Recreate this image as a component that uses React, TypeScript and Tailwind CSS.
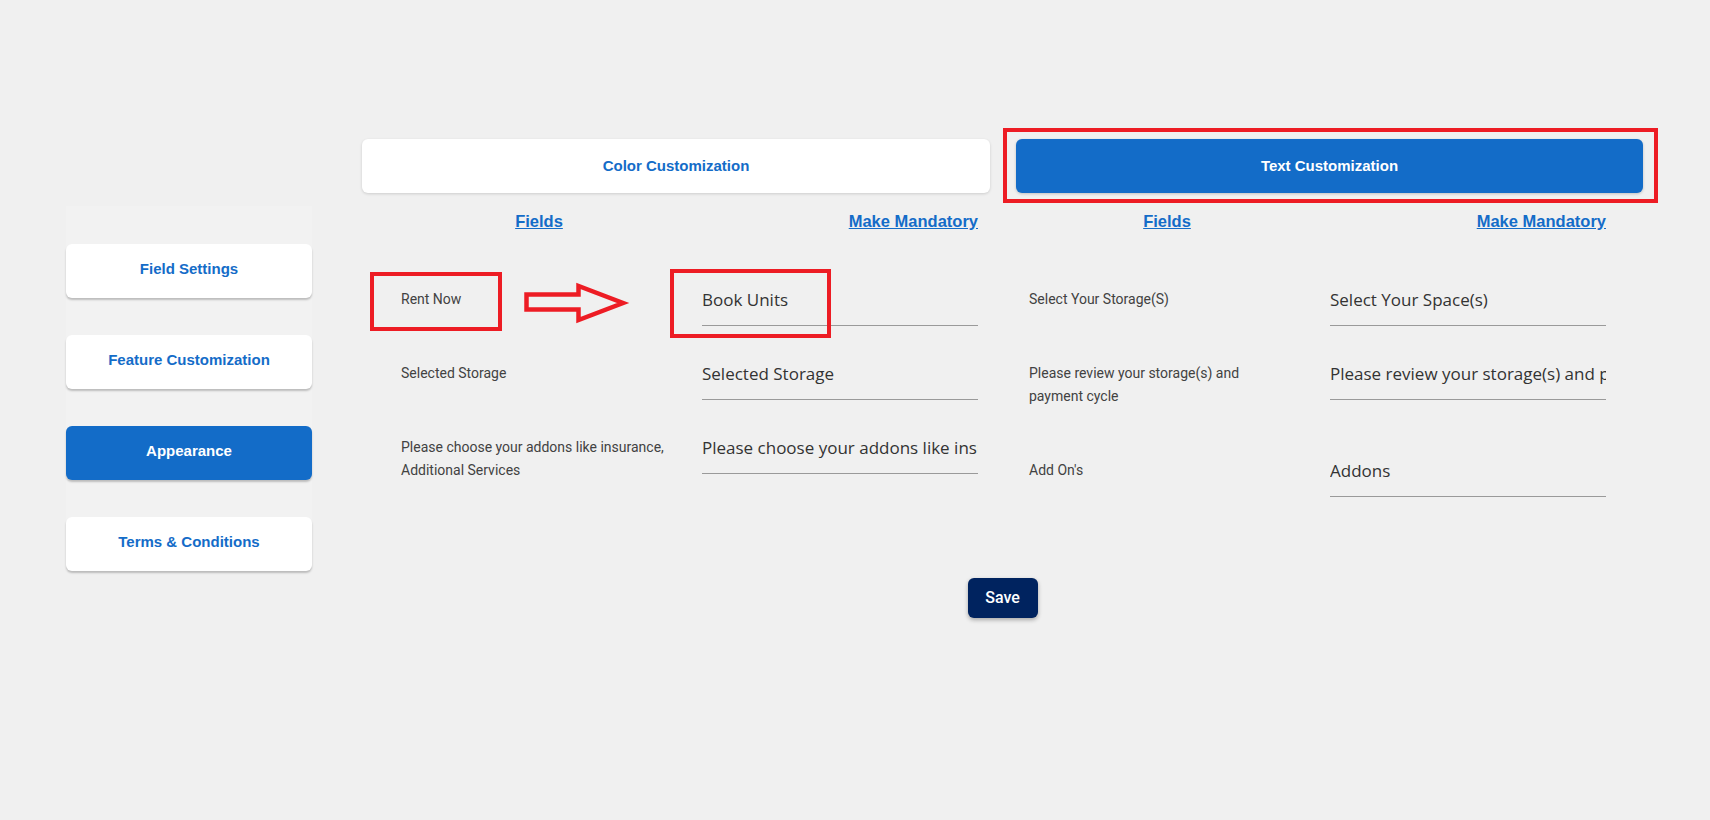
import React from "react";

type Row = { label: string[]; value: string };

const leftRows: Row[] = [
  { label: ["Rent Now"], value: "Book Units" },
  { label: ["Selected Storage"], value: "Selected Storage" },
  {
    label: ["Please choose your addons like insurance,", "Additional Services"],
    value: "Please choose your addons like insurance, Additional Services",
  },
];

const rightRows: Row[] = [
  { label: ["Select Your Storage(S)"], value: "Select Your Space(s)" },
  {
    label: ["Please review your storage(s) and", "payment cycle"],
    value: "Please review your storage(s) and payment cycle",
  },
  { label: ["Add On's"], value: "Addons" },
];

function SideButton({ text, active }: { text: string; active?: boolean }) {
  return (
    <button
      className={
        "h-[54px] w-full rounded-[6px] pb-[3px] font-['Liberation_Sans',Arial,sans-serif] text-[15px] font-bold shadow-[0_2px_2px_rgba(0,0,0,0.22)] " +
        (active ? "bg-[#136cc8] text-white" : "bg-white text-[#146cc8]")
      }
    >
      {text}
    </button>
  );
}

function Panel({ rows }: { rows: Row[] }) {
  return (
    <div className="w-[628px] shrink-0">
      <div className="mt-[19px] grid grid-cols-[301px_276px] font-['Liberation_Sans',Arial,sans-serif] text-[16.5px] font-bold leading-[19px] text-[#146cc8]">
        <div className="w-[276px] text-center">
          <span className="underline">Fields</span>
        </div>
        <div className="text-right">
          <span className="underline">Make Mandatory</span>
        </div>
      </div>
      <div className="mt-[57px] flex flex-col gap-[35px]">
        {rows.map((r, i) => (
          <div key={i} className="grid grid-cols-[301px_276px] items-start">
            <div className="pb-[16px] font-['Roboto',sans-serif] text-[14px] leading-[23px] text-[#424242]">
              {r.label.map((l, j) => (
                <div key={j} className="whitespace-nowrap">
                  {l}
                </div>
              ))}
            </div>
            <div className="w-[276px] overflow-hidden whitespace-nowrap border-b border-[#9a9a9a] pb-[13px] font-['Open_Sans',sans-serif] text-[17px] leading-[24px] text-[#333333]">
              {r.value}
            </div>
          </div>
        ))}
      </div>
    </div>
  );
}

export default function App() {
  return (
    <div className="relative min-h-screen w-full overflow-hidden bg-[#f0f0f0] font-['Roboto',sans-serif]">
      <div className="flex">
        <aside className="ml-[66px] mt-[206px] flex w-[246px] shrink-0 flex-col gap-[37px] self-start bg-[#f2f2f2] pt-[38px]">
          <SideButton text="Field Settings" />
          <SideButton text="Feature Customization" />
          <SideButton text="Appearance" active />
          <SideButton text="Terms & Conditions" />
        </aside>
        <main className="ml-[50px] w-[1281px] shrink-0 pt-[139px]">
          <div className="grid grid-cols-[628px_627px] gap-[26px] font-['Liberation_Sans',Arial,sans-serif] text-[15px] font-bold">
            <button className="h-[54px] rounded-[6px] bg-white text-[#146cc8] shadow-[0_1px_3px_rgba(0,0,0,0.15)]">
              Color Customization
            </button>
            <button className="h-[54px] rounded-[6px] bg-[#136cc8] text-white shadow-[0_1px_3px_rgba(0,0,0,0.2)]">
              Text Customization
            </button>
          </div>
          <div className="ml-[39px] flex">
            <Panel rows={leftRows} />
            <Panel rows={rightRows} />
          </div>
          <div className="mt-[80px] flex justify-center">
            <button className="h-[40px] w-[70px] rounded-[6px] bg-[#00235f] font-['Roboto',sans-serif] text-[16px] font-medium text-white shadow-[0_2px_4px_rgba(0,0,0,0.3)]">
              Save
            </button>
          </div>
        </main>
      </div>

      {/* red annotations */}
      <div className="pointer-events-none absolute left-[1003px] top-[128px] h-[75px] w-[655px] border-[4px] border-[#ed1c24]" />
      <div className="pointer-events-none absolute left-[370px] top-[272px] h-[59px] w-[132px] border-[4px] border-[#ed1c24]" />
      <div className="pointer-events-none absolute left-[670px] top-[269px] h-[69px] w-[161px] border-[4px] border-[#ed1c24]" />
      <svg
        className="pointer-events-none absolute left-[520px] top-[280px]"
        width="112"
        height="50"
        viewBox="0 0 112 50"
      >
        <polygon
          points="6.5,14.5 58.5,14.5 58.5,6 103,23 58.5,40 58.5,29.5 6.5,29.5"
          fill="none"
          stroke="#ed1c24"
          strokeWidth="4.5"
          strokeLinejoin="miter"
        />
      </svg>
    </div>
  );
}
